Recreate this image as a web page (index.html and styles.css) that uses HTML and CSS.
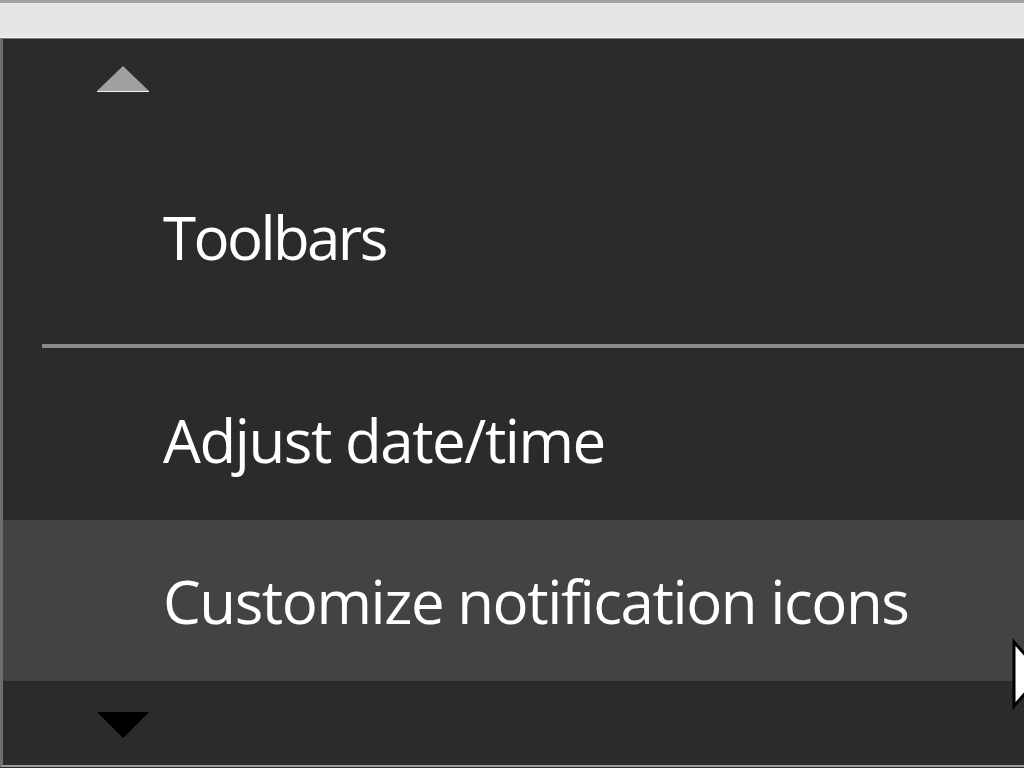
FILE: index.html
```html
<!DOCTYPE html>
<html lang="en">
<head>
<meta charset="utf-8">
<title>Menu</title>
<link rel="stylesheet" href="styles.css">
</head>
<body>
<div class="titlebar"></div>
<div class="panel">
  <div class="scroll scroll-up"><span class="tri-up"></span></div>
  <div class="item item-first">Toolbars</div>
  <div class="sep-wrap"><div class="sep"></div></div>
  <div class="item">Adjust date/time</div>
  <div class="item item-active">Customize notification icons</div>
  <div class="scroll scroll-down"><span class="tri-down"></span></div>
</div>
<svg class="cursor" width="20" height="70" viewBox="0 0 20 70"><path d="M2 2 L2 66 L30 34 Z" fill="#fff" stroke="#000" stroke-width="3" stroke-linejoin="miter"/></svg>
</body>
</html>
```
FILE: styles.css
```css
html, body {
  margin: 0;
  padding: 0;
  width: 1024px;
  height: 768px;
  overflow: hidden;
  background: #2b2b2b;
  font-family: "Open Sans", "Noto Sans", sans-serif;
}
.titlebar {
  height: 34px;
  background: #e6e6e6;
  border-top: 3px solid #a2a2a2;
  border-bottom: 1px solid #f6f6f6;
  box-shadow: 0 1px 0 #777;
  position: relative;
}
.panel {
  height: 726px;
  margin-top: 1px;
  background: #2b2b2b;
  border-left: 3px solid #6e6e6e;
  border-bottom: 2px solid #9a9a9a;
  display: flex;
  flex-direction: column;
}
.scroll {
  display: flex;
  padding-left: 94px;
}
.scroll-up {
  height: 118px;
  padding-top: 27px;
  box-sizing: border-box;
}
.tri-up {
  width: 0;
  height: 0;
  border-left: 26px solid transparent;
  border-right: 26px solid transparent;
  border-bottom: 25px solid #a0a0a0;
  box-shadow: 0 1px 0 #f0f0f0;
}
.scroll-down {
  height: 84px;
  padding-top: 31px;
  box-sizing: border-box;
}
.tri-down {
  width: 0;
  height: 0;
  border-left: 26px solid transparent;
  border-right: 26px solid transparent;
  border-top: 26px solid #000;
}
.item {
  height: 161px;
  display: flex;
  align-items: center;
  padding-left: 160px;
  color: #ffffff;
  font-size: 60px;
  letter-spacing: -1.45px;
  white-space: nowrap;
}
.item-first {
  letter-spacing: -2.6px;
}
.item-active {
  background: #434343;
}
.sep-wrap {
  height: 42px;
  display: flex;
  align-items: flex-start;
  padding-top: 26px;
  box-sizing: border-box;
}
.sep {
  margin-left: 39px;
  flex: 1;
  height: 4px;
  background: #8a8a8a;
}
.cursor {
  position: absolute;
  left: 1012px;
  top: 640px;
  overflow: visible;
}
```
